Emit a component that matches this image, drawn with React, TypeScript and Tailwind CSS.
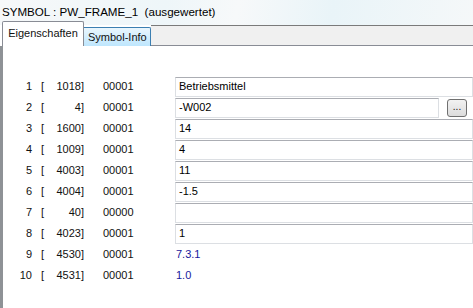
const rows: { n: number; id: string; flag: string; value: string; kind: "input" | "browse" | "text" }[] = [
  { n: 1, id: "1018]", flag: "00001", value: "Betriebsmittel", kind: "input" },
  { n: 2, id: "4]", flag: "00001", value: "-W002", kind: "browse" },
  { n: 3, id: "1600]", flag: "00001", value: "14", kind: "input" },
  { n: 4, id: "1009]", flag: "00001", value: "4", kind: "input" },
  { n: 5, id: "4003]", flag: "00001", value: "11", kind: "input" },
  { n: 6, id: "4004]", flag: "00001", value: "-1.5", kind: "input" },
  { n: 7, id: "40]", flag: "00000", value: "", kind: "input" },
  { n: 8, id: "4023]", flag: "00001", value: "1", kind: "input" },
  { n: 9, id: "4530]", flag: "00001", value: "7.3.1", kind: "text" },
  { n: 10, id: "4531]", flag: "00001", value: "1.0", kind: "text" },
];

function Field({ value }: { value: string }) {
  return (
    <div className="h-[20px] flex-1 min-w-0 flex items-center pl-[3px] bg-white border border-[#dcdfe3] border-t-[#abadb3] text-black">
      {value}
    </div>
  );
}

export default function App() {
  return (
    <div className="w-[473px] h-[308px] overflow-hidden flex flex-col bg-white text-[11px] text-[#111] font-['Liberation_Sans',Arial,sans-serif]">
      {/* Titel */}
      <div className="h-[25px] shrink-0 flex items-center pl-[2px] pb-[1px] text-[11.6px] text-black bg-[linear-gradient(100deg,#f6f8f9_0%,#eef6f9_35%,#f7f9fa_50%,#e9f4f8_70%,#f5f8f9_100%)]">
        SYMBOL : PW_FRAME_1&nbsp;&nbsp;(ausgewertet)
      </div>

      {/* Reiter */}
      <div className="h-[21px] shrink-0 flex items-end">
        <div className="relative z-10 -mt-[3px] h-[25px] w-[82px] ml-[2px] flex items-center justify-center pb-[2px] bg-white border border-b-0 border-[#898c95] rounded-t-[2px]">
          Eigenschaften
        </div>
        <div className="h-[19px] w-[67px] flex items-center pl-[4px] bg-[linear-gradient(#eaf6fd,#bee6fd)] border border-b-0 border-l-0 border-[#3c7fb1] rounded-tr-[2px]">
          Symbol-Info
        </div>
        <div className="flex-1 h-[21px] bg-[#f0f0f0] border-t border-[#7a7a7a] border-b border-b-[#898c95]" />
      </div>

      {/* Inhalt */}
      <div className="flex-1 flex flex-col pt-[30px] border-l-[3px] border-[#8e9296]">
        {rows.map((r) => (
          <div key={r.n} className="h-[21px] flex items-center">
            <span className="w-[29px] text-right">{r.n}</span>
            <span className="ml-[9px] w-[43px] flex justify-between">
              <span>[</span>
              <span>{r.id}</span>
            </span>
            <span className="ml-[19px] w-[72px]">{r.flag}</span>
            {r.kind === "input" && <Field value={r.value} />}
            {r.kind === "browse" && (
              <div className="flex-1 min-w-0 flex items-center">
                <Field value={r.value} />
                <button className="ml-[8px] mr-[6px] w-[20px] h-[18px] rounded-[3px] border border-[#707070] bg-[linear-gradient(#f2f2f2,#dcdcdc)] text-[10px] leading-none pb-[4px] flex items-end justify-center">
                  ...
                </button>
              </div>
            )}
            {r.kind === "text" && <span className="pl-[1px] text-[#18189c]">{r.value}</span>}
          </div>
        ))}
      </div>
    </div>
  );
}
